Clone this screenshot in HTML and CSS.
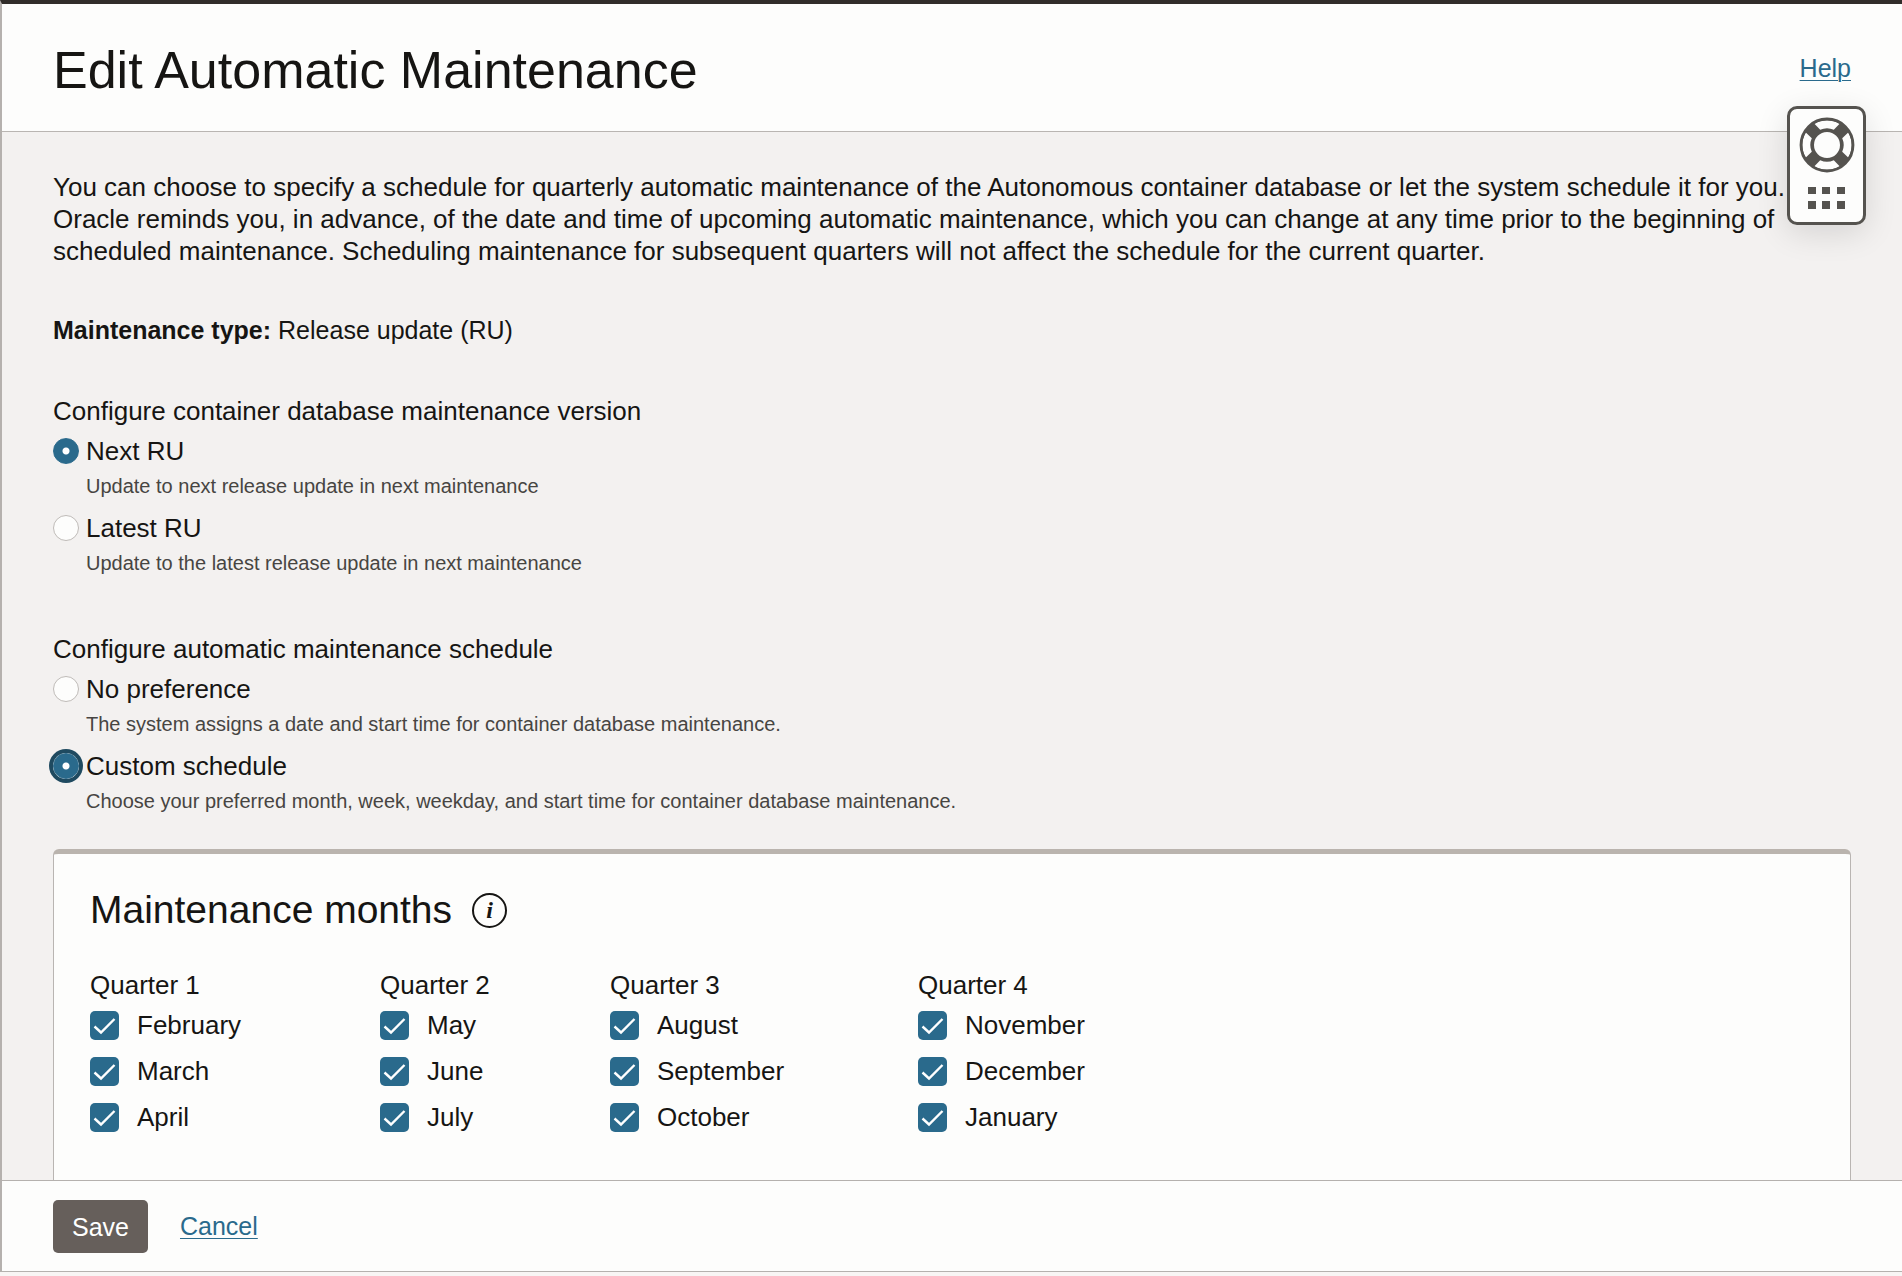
FILE: index.html
```html
<!DOCTYPE html>
<html lang="en">
<head>
<meta charset="utf-8">
<title>Edit Automatic Maintenance</title>
<link rel="stylesheet" href="styles.css">
</head>
<body>
<div class="dialog">
  <header class="dialog-header">
    <h1>Edit Automatic Maintenance</h1>
    <a class="link" href="#help">Help</a>
  </header>

  <main class="dialog-body">
    <p class="intro">You can choose to specify a schedule for quarterly automatic maintenance of the Autonomous container database or let the system schedule it for you. Oracle reminds you, in advance, of the date and time of upcoming automatic maintenance, which you can change at any time prior to the beginning of scheduled maintenance. Scheduling maintenance for subsequent quarters will not affect the schedule for the current quarter.</p>
    <p class="type"><strong>Maintenance type:</strong> Release update (RU)</p>

    <fieldset class="group">
      <legend>Configure container database maintenance version</legend>
      <div class="option">
        <input type="radio" name="version" id="next-ru" aria-describedby="next-hint" checked>
        <label for="next-ru">Next RU</label>
        <p class="hint" id="next-hint">Update to next release update in next maintenance</p>
      </div>
      <div class="option">
        <input type="radio" name="version" id="latest-ru" aria-describedby="latest-hint">
        <label for="latest-ru">Latest RU</label>
        <p class="hint" id="latest-hint">Update to the latest release update in next maintenance</p>
      </div>
    </fieldset>

    <fieldset class="group">
      <legend>Configure automatic maintenance schedule</legend>
      <div class="option">
        <input type="radio" name="schedule" id="no-preference" aria-describedby="none-hint">
        <label for="no-preference">No preference</label>
        <p class="hint" id="none-hint">The system assigns a date and start time for container database maintenance.</p>
      </div>
      <div class="option">
        <input class="focused" type="radio" name="schedule" id="custom" aria-describedby="custom-hint" checked>
        <label for="custom">Custom schedule</label>
        <p class="hint" id="custom-hint">Choose your preferred month, week, weekday, and start time for container database maintenance.</p>
      </div>
    </fieldset>

    <section class="card">
      <div class="card-title">
        <h2>Maintenance months</h2>
        <button class="info" type="button" aria-label="About maintenance months">i</button>
      </div>
      <div class="quarters">
        <fieldset class="quarter">
          <legend>Quarter 1</legend>
          <label><input type="checkbox" checked>February</label>
          <label><input type="checkbox" checked>March</label>
          <label><input type="checkbox" checked>April</label>
        </fieldset>
        <fieldset class="quarter">
          <legend>Quarter 2</legend>
          <label><input type="checkbox" checked>May</label>
          <label><input type="checkbox" checked>June</label>
          <label><input type="checkbox" checked>July</label>
        </fieldset>
        <fieldset class="quarter">
          <legend>Quarter 3</legend>
          <label><input type="checkbox" checked>August</label>
          <label><input type="checkbox" checked>September</label>
          <label><input type="checkbox" checked>October</label>
        </fieldset>
        <fieldset class="quarter">
          <legend>Quarter 4</legend>
          <label><input type="checkbox" checked>November</label>
          <label><input type="checkbox" checked>December</label>
          <label><input type="checkbox" checked>January</label>
        </fieldset>
      </div>
    </section>
  </main>

  <footer class="dialog-footer">
    <button class="save" type="button">Save</button>
    <a class="link" href="#cancel">Cancel</a>
  </footer>
</div>

<button class="support" type="button" aria-label="Support">
  <svg width="56" height="56" viewBox="-28 -28 56 56" aria-hidden="true">
    <circle r="20" fill="none" stroke="#55534f" stroke-width="12"/>
    <g fill="#fdfdfc">
      <path id="gap" d="M-12.600-21.200A24.700 24.700 0 0 1 12.600-21.200L6.800-15.200A16.500 16.500 0 0 0-6.800-15.200Z"/>
      <use href="#gap" transform="rotate(90)"/>
      <use href="#gap" transform="rotate(180)"/>
      <use href="#gap" transform="rotate(270)"/>
    </g>
    <circle r="14.500" fill="#fdfdfc" stroke="#55534f" stroke-width="3"/>
    <circle r="26" fill="none" stroke="#55534f" stroke-width="2.800"/>
  </svg>
  <svg width="37" height="22" viewBox="0 0 37 22" fill="#55534f" aria-hidden="true">
    <path d="M0 0h8v7H0zM14 0h8v7h-8zM29 0h8v7h-8zM0 14h8v8H0zM14 14h8v8h-8zM29 14h8v8h-8z"/>
  </svg>
</button>
</body>
</html>
```
FILE: styles.css
```css
* {
  box-sizing: border-box;
}

body {
  margin: 0;
  background: #f8f5f4;
  color: #161513;
  font: 26px/32px "Liberation Sans", Arial, sans-serif;
}

h1, h2, p, fieldset, legend {
  margin: 0;
  padding: 0;
  border: 0;
  font-weight: 400;
}

button, input {
  margin: 0;
  padding: 0;
  font: inherit;
}

.dialog {
  display: flex;
  flex-direction: column;
  height: calc(100vh - 4px);
  border: solid #b5b1ae;
  border-width: 0 0 1px 2px;
  border-top: 4px solid #312d2a;
  background: #fdfdfc;
}

.dialog-header {
  display: flex;
  align-items: center;
  justify-content: space-between;
  height: 128px;
  padding: 0 51px;
  border-bottom: 1px solid #b9b5b2;
}

h1 {
  padding-top: 4px;
  font-size: 52px;
  line-height: 64px;
}

.link {
  color: #2a6a8c;
  font-size: 25px;
  text-decoration-thickness: 1px;
  text-underline-offset: 3px;
}

.dialog-body {
  display: flex;
  flex: 1;
  flex-direction: column;
  min-height: 0;
  overflow: hidden;
  padding: 39px 51px 0;
  background: #f3f1f0;
}

.type {
  margin: 47px 0 49px;
  font-size: 25px;
}

.group {
  margin-bottom: 52px;
}

.group + .card {
  margin-top: -22px;
}

.option {
  display: grid;
  grid-template-columns: 26px 1fr;
  column-gap: 7px;
  align-items: center;
  padding-top: 8px;
  margin-bottom: 2px;
}

.hint {
  grid-column: 2;
  margin-top: 3px;
  color: #474542;
  font-size: 20px;
}

input[type="radio"] {
  appearance: none;
  width: 26px;
  height: 26px;
  border: 1px solid #bfbbb8;
  border-radius: 50%;
  background: #fdfdfc;
}

input[type="radio"]:checked {
  border-color: #2a6a8c;
  background: radial-gradient(circle, #fff 3px, #2a6a8c 4px);
}

input.focused {
  box-shadow: 0 0 0 4px #1f4a60;
}

.card {
  flex: 1;
  border: 1px solid #b9b5b2;
  border-top: 5px solid #bab4ae;
  border-bottom: 0;
  border-radius: 6px 6px 0 0;
  padding: 32px 36px 0;
  background: #fdfdfc;
}

.card-title {
  display: flex;
  align-items: center;
  gap: 20px;
  margin-bottom: 35px;
}

h2 {
  font-size: 39px;
  line-height: 48px;
}

.info {
  width: 35px;
  height: 35px;
  border: 2px solid #161513;
  border-radius: 50%;
  background: none;
  color: #161513;
  font: italic 700 24px/28px "Liberation Serif", serif;
}

.quarters {
  display: grid;
  grid-template-columns: 290px 230px 308px auto;
}

.quarter label {
  display: flex;
  align-items: center;
  gap: 18px;
  padding-top: 8px;
  margin-bottom: 6px;
}

input[type="checkbox"] {
  appearance: none;
  width: 29px;
  height: 29px;
  border-radius: 5px;
  background: #2a6a8c;
}

input[type="checkbox"]:checked {
  background-image: url("data:image/svg+xml,%3Csvg xmlns='http://www.w3.org/2000/svg' viewBox='0 0 29 29'%3E%3Cpath d='M4.500 15.500 11 21.500 24.500 8' fill='none' stroke='white' stroke-width='2.400'/%3E%3C/svg%3E");
}

.dialog-footer {
  display: flex;
  align-items: center;
  gap: 32px;
  height: 91px;
  padding: 0 51px;
  border-top: 1px solid #b5b1ae;
}

.save {
  padding: 11px 19px 10px;
  border: 0;
  border-radius: 5px;
  background: #665f5b;
  color: #fff;
  font-size: 25px;
}

.support {
  position: absolute;
  top: 106px;
  right: 36px;
  display: flex;
  flex-direction: column;
  align-items: center;
  gap: 14px;
  width: 79px;
  height: 119px;
  padding-top: 8px;
  border: 3px solid #55534f;
  border-radius: 10px;
  background: #fdfdfc;
  box-shadow: 0 8px 32px rgba(0, 0, 0, 0.12);
}
```
